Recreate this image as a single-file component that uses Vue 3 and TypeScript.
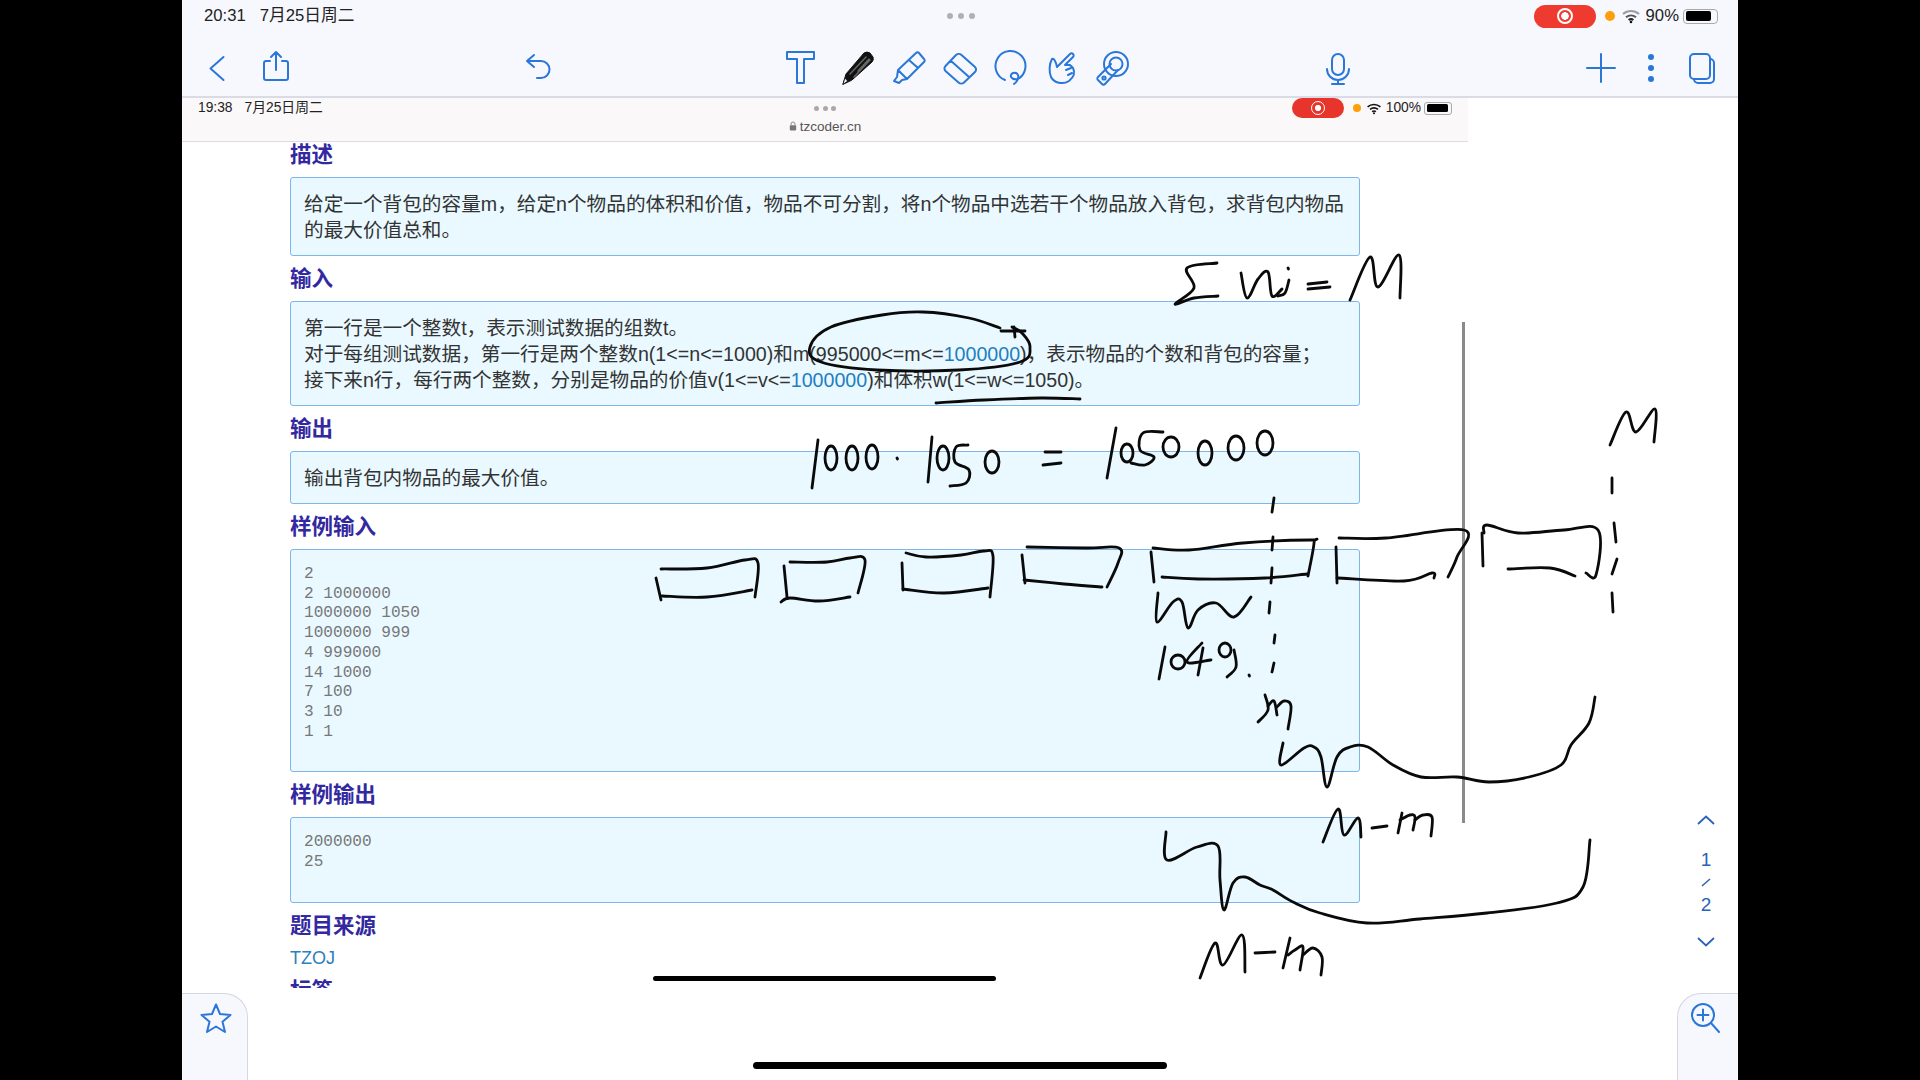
<script setup lang="ts">
const P = (...n: number[]): number[] => n

const strokes: number[][] = [
  // sigma w_i = M
  P(1217,263, 1187,268, 1194,288, 1175,304, 1194,298, 1218,296),
  P(1241,273, 1247,298, 1258,279, 1268,272, 1272,296, 1282,289),
  P(1288,268, 1288.5,269),
  P(1289,280, 1285,293, 1278,296),
  P(1308,284, 1327,282), P(1308,289, 1330,287),
  P(1350,300, 1370,257, 1378,287, 1399,255, 1400,298),
  // circled constraint
  P(1012,327, 1022,333, 1030,347, 1020,362, 959,370, 877,370, 821,362, 810,347, 831,327, 882,315, 923,312, 969,318, 1000,328),
  P(1001,331, 1025,331), P(1014,327, 1015,337),
  P(936,403, 984,400, 1040,398, 1080,399),
  // 1000 . 1050 = 1050000
  P(818,440, 812,488), P(897,458, 897.5,459),
  P(932,437, 928,482),
  P(968,445, 956,447, 955,462, 969,470, 966,483, 950,486),
  P(1045,452, 1061,452), P(1043,465, 1061,463),
  P(1116,428, 1107,478),
  P(1163,432, 1143,433, 1140,450, 1154,457, 1145,465, 1131,463),
  // boxes
  P(661,569, 707,568, 745,560, 758,563, 755,597), P(656,578, 661,600), P(662,596, 707,597, 752,590),
  P(790,562, 827,562, 850,558, 865,560, 858,593), P(784,566, 787,597), P(781,602, 790,598, 819,601, 850,597),
  P(906,553, 926,557, 961,555, 984,551, 993,556, 990,597), P(902,563, 903,590), P(903,589, 944,593, 988,588),
  P(1027,547, 1086,548, 1119,548, 1118,563, 1107,587), P(1022,555, 1025,583), P(1024,580, 1064,584, 1102,587),
  P(1153,548, 1189,550, 1243,543, 1310,540, 1314,543, 1308,576), P(1151,552, 1154,582), P(1162,577, 1198,579, 1265,578, 1307,574),
  P(1339,538, 1386,538, 1464,530, 1457,557, 1448,577), P(1336,547, 1337,583), P(1337,578, 1404,581, 1432,573, 1434,578),
  P(1484,533, 1487,525, 1518,533, 1564,530, 1598,530, 1596,575, 1586,573), P(1482,533, 1483,566), P(1508,569, 1550,568, 1575,576),
  // dashed cut
  P(1274,498, 1272,512), P(1273,537, 1272,550), P(1272,568, 1271,583), P(1270,602, 1269,613), P(1275,635, 1274,643), P(1274,663, 1272,672),
  P(1614,523, 1616,542), P(1617,559, 1612,574), P(1612,593, 1613,612), P(1612,478, 1612,493),
  // squiggle + 1049
  P(1158,593, 1157,622, 1173,602, 1182,602, 1188,628, 1198,610, 1216,603, 1234,617, 1251,597),
  P(1165,647, 1159,679),
  P(1202,643, 1187,662, 1211,660), P(1203,648, 1198,675),
  P(1234,650, 1236,667, 1227,677), P(1249,675, 1249.5,676),
  // m
  P(1265,695, 1268,710, 1258,722), P(1268,706, 1274,701, 1277,715), P(1277,707, 1284,701, 1291,706, 1288,729),
  // long curves
  P(1283,743, 1281,765, 1304,748, 1314,747, 1321,757, 1327,787, 1337,757, 1350,747, 1368,747, 1393,765, 1421,777, 1457,777, 1489,782, 1529,777, 1561,765, 1571,745, 1589,723, 1595,697),
  P(1166,832, 1167,860, 1197,847, 1218,846, 1220,880, 1224,910, 1233,883, 1245,877, 1260,885, 1273,890, 1293,902, 1320,913, 1367,923, 1420,919, 1487,913, 1557,903, 1583,887, 1590,840),
  // M-m
  P(1323,842, 1338,809, 1344,835, 1358,818, 1361,837), P(1372,828, 1387,826),
  P(1402,813, 1398,833), P(1400,820, 1410,815, 1415,817, 1413,830), P(1415,820, 1423,815, 1432,817, 1431,836),
  P(1200,978, 1215,943, 1223,965, 1242,935, 1245,972), P(1255,953, 1275,952),
  P(1290,938, 1283,968), P(1288,955, 1295,950, 1303,947, 1300,970), P(1303,955, 1313,948, 1322,957, 1321,975),
  // M at right
  P(1610,445, 1626,412, 1636,432, 1655,409, 1654,442),
]

const zeros = [
  [831,458,6,12],[852,458,6,12],[872,457,6,12],[943,458,6,12],[992,462,7,11],
  [1127,453,6,9],[1171,447,8,10],[1205,453,7,12],[1236,448,8,12],[1265,443,8,12],
  [1178,662,7,7],[1225,650,6,7],
]

function smooth(p: number[]): string {
  const pts: [number, number][] = []
  for (let i = 0; i < p.length; i += 2) pts.push([p[i], p[i + 1]])
  let d = `M${pts[0][0]} ${pts[0][1]}`
  for (let i = 0; i < pts.length - 1; i++) {
    const a = pts[Math.max(0, i - 1)], b = pts[i], c = pts[i + 1], e = pts[Math.min(pts.length - 1, i + 2)]
    const k = 0.18
    d += `C${(b[0] + (c[0] - a[0]) * k).toFixed(1)} ${(b[1] + (c[1] - a[1]) * k).toFixed(1)} ${(c[0] - (e[0] - b[0]) * k).toFixed(1)} ${(c[1] - (e[1] - b[1]) * k).toFixed(1)} ${c[0]} ${c[1]}`
  }
  return d
}
const inkPaths = strokes.map(smooth)

const sampleIn = '2\n2 1000000\n1000000 1050\n1000000 999\n4 999000\n14 1000\n7 100\n3 10\n1 1'
const sampleOut = '2000000\n25'
</script>

<template>
  <div class="screen">
    <div class="app">
      <header class="bar">
        <div class="status">
          <span class="clock"><span>20:31</span><span>7月25日周二</span></span>
          <span class="dots"><i></i><i></i><i></i></span>
          <span class="sys">
            <span class="pill"><b class="ring"></b></span>
            <i class="orange"></i>
            <svg class="wifi" viewBox="0 0 20 16"><path d="M2 6a12 12 0 0 1 16 0" stroke="#9a9ca3"/><path d="M5 9.2a8 8 0 0 1 10 0" stroke="#55565a"/><path d="M7.6 12a4 4 0 0 1 4.8 0" stroke="#222"/><circle cx="10" cy="14" r="1.3" fill="#111" stroke="none"/></svg>
            <span class="pct">90%</span>
            <span class="batt"><b></b></span>
          </span>
        </div>
        <div class="tools">
          <svg class="ico first" viewBox="0 0 36 36"><path d="M24.5 7 11.500 18.500 24.500 30"/></svg>
          <svg class="ico g23" viewBox="0 0 36 36"><path d="M12 11H8a2 2 0 0 0-2 2v15a2 2 0 0 0 2 2h20a2 2 0 0 0 2-2V13a2 2 0 0 0-2-2h-4M18 20V2M13 7l5-5 5 5"/></svg>
          <svg class="ico g226" viewBox="0 0 36 36"><path d="M14 5 7 11l7 6M7 11h14a8 8 0 0 1 0 17h-4"/></svg>
          <svg class="ico g226" viewBox="0 0 36 36"><path d="M5 2H32V9H22V33H15V9H5Z"/></svg>
          <svg class="ico g21" viewBox="0 0 36 36"><path class="fill" d="M4 34 7 24 25 3q3-2 6 0l3 4q1 3-1 5L13 30Z"/><path class="fine" d="M11 24 27 7M15 27 31 10M19 21 30 9"/><path class="tip" d="M4 34 6 28l2.500 3Z"/></svg>
          <svg class="ico g15" viewBox="0 0 36 36"><path d="M26 3a2 2 0 0 1 3 0l5 6a2 2 0 0 1 0 3L17 29l-9-9ZM19 10l9 8M8 20l-1 7-3 4 5 2 3-3 5-1"/></svg>
          <svg class="ico g16" viewBox="0 0 36 36"><path d="M14 5a4 4 0 0 1 5.500 0L33 17a3.500 3.500 0 0 1 0 5L22 32.500a4 4 0 0 1-5.500 0L3.500 21a3.500 3.500 0 0 1 0-5ZM8.500 10.500 27 27"/></svg>
          <svg class="ico g15" viewBox="0 0 36 36"><path d="M12 30A15 15 0 1 1 25 29c-4 1-8-1-7-4s6-3 7 0 -1 7-4 9"/></svg>
          <svg class="ico g15" viewBox="0 0 36 36"><path d="M8 9C5 14 5 22 7 27c3 6 12 8 18 4 5-4 6-9 4-13l-3-3h-5L29 7c2-2-1-5-3-3L16 14l-3 3c-1-5-3-9-5-8ZM22 20l5-2M24 25l4-2"/></svg>
          <svg class="ico g14" viewBox="0 0 36 36"><circle cx="22" cy="14" r="12"/><circle cx="22" cy="14" r="6.500"/><path d="M17 14 4 27a2 2 0 0 0 0 3l4 4a2 2 0 0 0 3 0L24 20"/><circle cx="10" cy="28" r="1.600"/></svg>
          <svg class="ico g190" viewBox="0 0 36 36"><rect x="12" y="4" width="12" height="21" rx="6"/><path d="M7 19a11 11 0 0 0 22 0M18 30v4M12 34h12"/></svg>
          <svg class="ico g227" viewBox="0 0 36 36"><path d="M4 18H32M18 4V32"/></svg>
          <svg class="ico g14" viewBox="0 0 36 36"><circle class="dot" cx="18" cy="7" r="3"/><circle class="dot" cx="18" cy="18" r="3"/><circle class="dot" cx="18" cy="29" r="3"/></svg>
          <svg class="ico g15" viewBox="0 0 36 36"><rect x="6" y="4" width="20" height="25" rx="4"/><path d="M26 9a4 4 0 0 1 4 4v16a4 4 0 0 1-4 4H14a4 4 0 0 1-4-4"/></svg>
        </div>
      </header>

      <main class="stage">
        <section class="page">
          <div class="ipad">
            <div class="ipad-row">
              <span class="iclock"><span>19:38</span><span>7月25日周二</span></span>
              <span class="idots"><i></i><i></i><i></i></span>
              <span class="isys">
                <span class="ipill"><b class="iring"></b></span>
                <i class="iorange"></i>
                <svg class="iwifi" viewBox="0 0 20 16"><path d="M2 6a12 12 0 0 1 16 0"/><path d="M5 9.200a8 8 0 0 1 10 0"/><path d="M7.600 12a4 4 0 0 1 4.800 0"/><circle cx="10" cy="14" r="1.300" fill="#111" stroke="none"/></svg>
                <span class="ipct">100%</span>
                <span class="ibatt"><b></b></span>
              </span>
            </div>
            <div class="url">
              <svg class="lock" viewBox="0 0 10 12"><path d="M2.500 5V3.500a2.500 2.500 0 0 1 5 0V5" fill="none" stroke="#777" stroke-width="1"/><rect x="1" y="5" width="8" height="6.500" rx="1" fill="#777"/></svg>
              <span>tzcoder.cn</span>
            </div>
          </div>
          <div class="doc">
            <div class="doc-inner">
              <h3>描述</h3>
              <div class="box">给定一个背包的容量m，给定n个物品的体积和价值，物品不可分割，将n个物品中选若干个物品放入背包，求背包内物品<br>的最大价值总和。</div>
              <h3>输入</h3>
              <div class="box">第一行是一个整数t，表示测试数据的组数t。<br>对于每组测试数据，第一行是两个整数n(1&lt;=n&lt;=1000)和m(995000&lt;=m&lt;=<span class="lnk">1000000</span>)，表示物品的个数和背包的容量；<br>接下来n行，每行两个整数，分别是物品的价值v(1&lt;=v&lt;=<span class="lnk">1000000</span>)和体积w(1&lt;=w&lt;=1050)。</div>
              <h3>输出</h3>
              <div class="box">输出背包内物品的最大价值。</div>
              <h3>样例输入</h3>
              <pre class="box code">{{ sampleIn }}</pre>
              <h3>样例输出</h3>
              <pre class="box code">{{ sampleOut }}</pre>
              <h3>题目来源</h3>
              <div class="src">TZOJ</div>
              <h3>标签</h3>
            </div>
          </div>
        </section>
        <aside class="side">
          <nav class="pager">
            <svg class="chev" viewBox="0 0 18 10"><path d="M1 9 9 1.500 17 9"/></svg>
            <span class="num n1">1</span>
            <svg class="slash" viewBox="0 0 10 10"><path d="M1 9 9 2"/></svg>
            <span class="num">2</span>
            <svg class="chev n2" viewBox="0 0 18 10"><path d="M1 1 9 8.500 17 1"/></svg>
          </nav>
          <div class="tab right">
            <svg class="zoom" viewBox="0 0 32 32"><circle cx="13" cy="13" r="11"/><path d="M13 7.500v11M7.500 13h11M21 21l8 9"/></svg>
          </div>
        </aside>
        <div class="tab left">
          <svg class="star" viewBox="0 0 32 32"><path d="M16 2.500 20 12l10.500.9-8 6.900 2.500 10.200-9-5.500-9 5.500 2.500-10.200-8-6.900L12 12Z"/></svg>
        </div>
      </main>
    </div>

    <span class="home inner"></span>
    <span class="home outer"></span>

    <svg class="ink" viewBox="0 0 1920 1080" width="1920" height="1080">
      <path class="rule" d="M1463.500 322V823"/>
      <path v-for="(d, i) in inkPaths" :key="i" :d="d"/>
      <ellipse v-for="(z, i) in zeros" :key="'z' + i" :cx="z[0]" :cy="z[1]" :rx="z[2]" :ry="z[3]"/>
    </svg>
  </div>
</template>

<style scoped>
.screen {
  position: relative;
  width: 1920px;
  height: 1080px;
  background: #000;
  overflow: hidden;
  font-family: "Liberation Sans", "Noto Sans CJK SC", sans-serif;
  color: #333;
}
.app {
  width: 1556px;
  height: 1080px;
  margin-left: 182px;
  background: #fff;
  display: flex;
  flex-direction: column;
}
.bar {
  background: #f6f8fd;
  border-bottom: 2px solid #d9dce5;
  box-sizing: border-box;
  height: 98px;
  flex: none;
}
.status {
  height: 32px;
  display: grid;
  grid-template-columns: 1fr auto 1fr;
  align-items: center;
  font-size: 16.700px;
  line-height: 20px;
  color: #222;
  padding: 0 20px 0 22px;
}
.clock { display: flex; gap: 14px; align-items: baseline; }
.dots { display: flex; gap: 5px; }
.dots i { width: 6px; height: 6px; border-radius: 50%; background: #aeb0b8; }
.sys { display: flex; align-items: center; justify-self: end; }
.pill { width: 62px; height: 23px; border-radius: 12px; background: #ef3a30; display: flex; align-items: center; justify-content: center; }
.ring { width: 16px; height: 16px; border-radius: 50%; box-sizing: border-box; border: 2px solid #fff; background: radial-gradient(circle, #fff 0 3.500px, #ef3a30 4px); }
.orange { width: 10px; height: 10px; border-radius: 50%; background: #ff9f0a; margin-left: 9px; }
.wifi { width: 20px; height: 16px; margin-left: 6px; fill: none; stroke-width: 2; }
.pct { margin-left: 5px; }
.batt { width: 35px; height: 15px; box-sizing: border-box; border: 1.500px solid #aaa; border-radius: 4px; padding: 1.500px; margin-left: 4px; }
.batt b { display: block; width: 85%; height: 100%; background: #000; border-radius: 2px; }

.tools {
  height: 64px;
  box-sizing: border-box;
  padding: 8px 0 0 17px;
  display: flex;
  align-items: center;
}
.ico { width: 36px; height: 36px; flex: none; fill: none; stroke: #2a77d9; stroke-width: 2; stroke-linejoin: round; stroke-linecap: round; }
.ico .fill { fill: #111; stroke: #111; stroke-width: 1; }
.ico .fine { stroke: #666; stroke-width: 1.500; }
.ico .tip { fill: #fff; stroke: #111; stroke-width: .8; }
.ico .dot { fill: #2a77d9; stroke: none; }
.g14 { margin-left: 14px; }
.g15 { margin-left: 15px; }
.g16 { margin-left: 16px; }
.g21 { margin-left: 21px; }
.g23 { margin-left: 23px; }
.g190 { margin-left: 190px; }
.g226 { margin-left: 226px; }
.g227 { margin-left: 227px; }

.stage { flex: 1; display: flex; min-height: 0; position: relative; }
.page { width: 1286px; flex: none; display: flex; flex-direction: column; }
.ipad { height: 44px; box-sizing: border-box; background: #faf8f9; border-bottom: 1px solid #dcdce1; flex: none; }
.ipad-row {
  height: 18px;
  display: grid;
  grid-template-columns: 1fr auto 1fr;
  align-items: center;
  font-size: 13.800px;
  line-height: 18px;
  color: #222;
  padding: 0 16px;
}
.iclock { display: flex; gap: 12px; align-items: baseline; }
.idots { display: flex; gap: 3.500px; }
.idots i { width: 5px; height: 5px; border-radius: 50%; background: #a9a9ad; }
.isys { display: flex; align-items: center; justify-self: end; }
.ipill { width: 52px; height: 20px; border-radius: 10px; background: #e8352c; display: flex; align-items: center; justify-content: center; }
.iring { width: 14px; height: 14px; border-radius: 50%; box-sizing: border-box; border: 1.500px solid #fff; background: radial-gradient(circle, #fff 0 2.800px, #e8352c 3.300px); }
.iorange { width: 8px; height: 8px; border-radius: 50%; background: #ff9f0a; margin-left: 9px; }
.iwifi { width: 16px; height: 13px; margin-left: 5px; fill: none; stroke: #111; stroke-width: 2; }
.ipct { margin-left: 4px; }
.ibatt { width: 28px; height: 13px; box-sizing: border-box; border: 1px solid #aaa; border-radius: 3px; padding: 1.500px; margin-left: 3px; }
.ibatt b { display: block; width: 92%; height: 100%; background: #000; border-radius: 1.500px; }
.url { display: flex; align-items: center; justify-content: center; gap: 3px; height: 22px; font-size: 13.500px; color: #555; margin-top: -1px; }
.lock { width: 8px; height: 10px; }

.doc { height: 846px; flex: none; overflow: hidden; background: #fff; }
.doc-inner { margin-top: -10px; padding: 0 108px; }
h3 {
  margin: 0;
  height: 45px;
  line-height: 47px;
  font-size: 21.500px;
  font-weight: 700;
  color: #32289f;
}
.box {
  margin: 0;
  background: #e9f9ff;
  border: 1.500px solid #7fb6ea;
  border-radius: 3px;
  box-sizing: border-box;
  padding: 12.500px 13px;
  font-size: 19.650px;
  line-height: 26px;
  color: #333;
  white-space: nowrap;
}
.code {
  font-family: "Liberation Mono", monospace;
  font-size: 16.100px;
  line-height: 19.700px;
  color: #777;
  white-space: pre;
  padding-top: 15px;
  padding-bottom: 29px;
}
.lnk { color: #1f7ec2; }
.src { font-size: 18px; line-height: 20px; color: #2c80bd; }

.side { flex: 1; display: flex; flex-direction: column; align-items: flex-end; position: relative; }
.pager {
  position: absolute;
  left: 220px;
  top: 717px;
  width: 36px;
  display: flex;
  flex-direction: column;
  align-items: center;
  color: #2a62b8;
}
.chev { width: 18px; height: 10px; fill: none; stroke: #2a62b8; stroke-width: 1.800; }
.num { font-size: 19px; line-height: 22px; }
.n1 { margin-top: 24px; }
.n2 { margin-top: 21px; }
.slash { width: 10px; height: 10px; fill: none; stroke: #2a62b8; stroke-width: 1.500; margin: 6px 0 7px; }

.tab {
  position: absolute;
  bottom: 0;
  height: 87px;
  box-sizing: border-box;
  background: #f6f8fd;
  border-top: 1.500px solid #d5d7df;
}
.tab.left { left: 0; width: 66px; border-right: 1.500px solid #d5d7df; border-top-right-radius: 24px; }
.tab.right { right: 0; width: 61px; border-left: 1.500px solid #d5d7df; border-top-left-radius: 24px; }
.star { position: absolute; left: 18px; top: 8px; width: 32px; height: 32px; fill: none; stroke: #2a77d9; stroke-width: 2; stroke-linejoin: round; }
.zoom { position: absolute; left: 12px; top: 8px; width: 32px; height: 32px; fill: none; stroke: #2a77d9; stroke-width: 2; stroke-linecap: round; }

.home { position: absolute; background: #000; border-radius: 4px; }
.inner { left: 653px; top: 976px; width: 343px; height: 5px; }
.outer { left: 753px; top: 1062px; width: 414px; height: 7px; }

.ink { position: absolute; left: 0; top: 0; pointer-events: none; fill: none; stroke: #0a0a0a; stroke-width: 2.800; stroke-linecap: round; stroke-linejoin: round; }
.ink .rule { stroke: #8a8a8a; stroke-width: 3; stroke-linecap: butt; }
</style>
